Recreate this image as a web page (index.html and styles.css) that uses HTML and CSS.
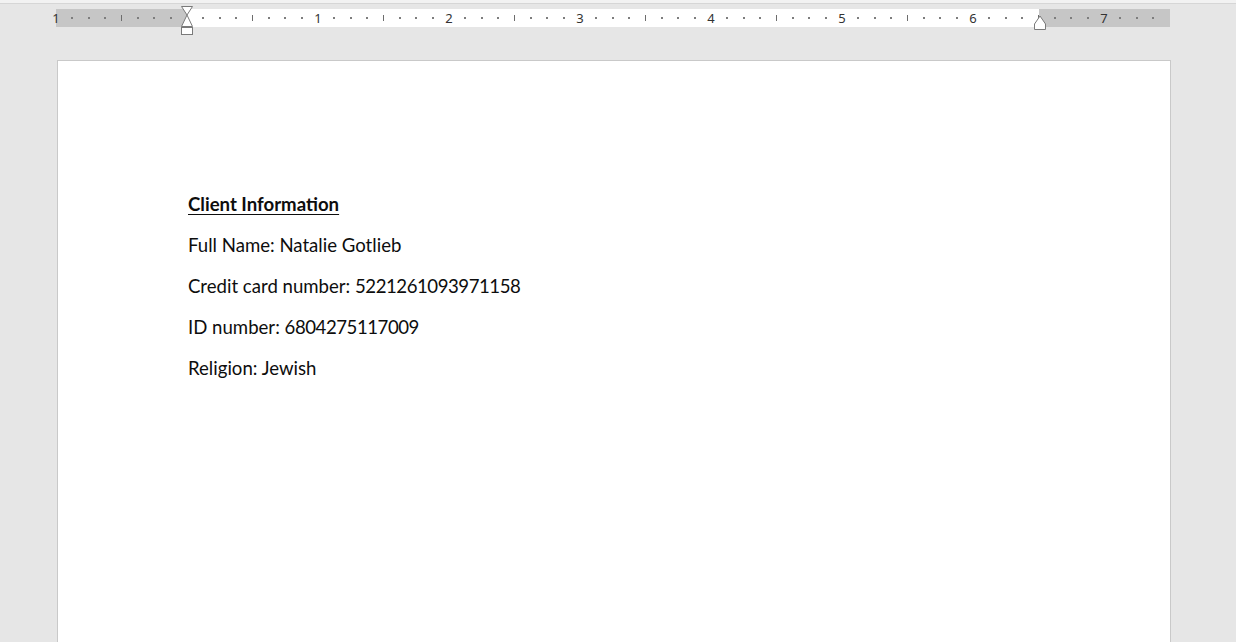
FILE: index.html
```html
<!DOCTYPE html>
<html>
<head>
<meta charset="utf-8">
<title>Client Information</title>
<link rel="stylesheet" href="styles.css">
</head>
<body>
<div class="topbar"></div>
<div class="ruler-wrap">
  <div class="ruler">
    <div class="marks">
      <span class="n">1</span><span class="d"></span><span class="d"></span><span class="d"></span><span class="l"></span><span class="d"></span><span class="d"></span><span class="d"></span>
      <span class="e"></span><span class="d"></span><span class="d"></span><span class="d"></span><span class="l"></span><span class="d"></span><span class="d"></span><span class="d"></span>
      <span class="n">1</span><span class="d"></span><span class="d"></span><span class="d"></span><span class="l"></span><span class="d"></span><span class="d"></span><span class="d"></span>
      <span class="n">2</span><span class="d"></span><span class="d"></span><span class="d"></span><span class="l"></span><span class="d"></span><span class="d"></span><span class="d"></span>
      <span class="n">3</span><span class="d"></span><span class="d"></span><span class="d"></span><span class="l"></span><span class="d"></span><span class="d"></span><span class="d"></span>
      <span class="n">4</span><span class="d"></span><span class="d"></span><span class="d"></span><span class="l"></span><span class="d"></span><span class="d"></span><span class="d"></span>
      <span class="n">5</span><span class="d"></span><span class="d"></span><span class="d"></span><span class="l"></span><span class="d"></span><span class="d"></span><span class="d"></span>
      <span class="n">6</span><span class="d"></span><span class="d"></span><span class="d"></span><span class="l"></span><span class="d"></span><span class="d"></span><span class="d"></span>
      <span class="n">7</span><span class="d"></span><span class="d"></span><span class="d"></span>
    </div>
    <svg class="indent-left" width="14" height="30" viewBox="0 0 14 30">
      <path d="M1.5 0.5 H12.5 L7 9 Z" fill="#fff" stroke="#7a7a7a" stroke-width="1"/>
      <path d="M7 9 L12.5 20.5 H1.5 Z" fill="#fff" stroke="#7a7a7a" stroke-width="1"/>
      <rect x="1.5" y="21.5" width="11" height="7" fill="#fff" stroke="#7a7a7a" stroke-width="1"/>
    </svg>
    <svg class="indent-right" width="14" height="16" viewBox="0 0 14 16">
      <path d="M7 1 L12.5 9 V14.5 H1.5 V9 Z" fill="#fff" stroke="#7a7a7a" stroke-width="1"/>
    </svg>
  </div>
</div>
<div class="workspace">
  <div class="page">
    <p class="heading">Client Information</p>
    <p>Full Name: Natalie Gotlieb</p>
    <p>Credit card number: <span class="num">5221261093971158</span></p>
    <p>ID number: <span class="num">6804275117009</span></p>
    <p>Religion: Jewish</p>
  </div>
</div>
</body>
</html>
```
FILE: styles.css
```css
html, body {
  margin: 0;
  padding: 0;
  background: #e6e6e6;
  overflow: hidden;
  height: 642px;
}
body {
  font-family: Lato, "Open Sans", sans-serif;
}
.topbar {
  height: 3px;
  background: #f2f2f2;
  border-bottom: 1px solid #d6d6d6;
}
.ruler-wrap {
  padding-top: 5px;
  padding-left: 56px;
}
.ruler {
  position: relative;
  width: 1114px;
  height: 18px;
  background: linear-gradient(to right, #c6c6c6 0, #c6c6c6 131px, #ffffff 131px, #ffffff 983px, #c6c6c6 983px, #c6c6c6 100%);
}
.marks {
  display: flex;
  height: 18px;
  margin-left: -8.1875px;
}
.marks > span {
  flex: 0 0 16.375px;
  width: 16.375px;
  height: 18px;
  display: flex;
  align-items: center;
  justify-content: center;
}
.marks .d::before {
  content: "";
  display: block;
  width: 2px;
  height: 2px;
  background: #7d7d7d;
}
.marks .l::before {
  content: "";
  display: block;
  width: 1px;
  height: 6px;
  background: #6d6d6d;
}
.marks .n {
  font-family: "Noto Sans", "Open Sans", sans-serif;
  font-size: 13px;
  color: #333;
  line-height: 18px;
}
.indent-left {
  position: absolute;
  left: 124px;
  top: -3px;
}
.indent-right {
  position: absolute;
  left: 977px;
  top: 6px;
}
.workspace {
  padding-top: 33px;
  padding-left: 57px;
}
.page {
  width: 1114px;
  height: 700px;
  background: #fff;
  border: 1px solid #c9c9c9;
  box-sizing: border-box;
  padding: 130px 0 0 130px;
}
.page p {
  margin: 0 0 14.6px 0;
  font-size: 18.6px;
  line-height: 26.4px;
  color: #0d0d0d;
}
.page .num {
  font-variant-numeric: tabular-nums;
  letter-spacing: -0.45px;
}
.page p.heading {
  font-weight: bold;
  text-decoration: underline;
  text-underline-offset: 3px;
}
```
